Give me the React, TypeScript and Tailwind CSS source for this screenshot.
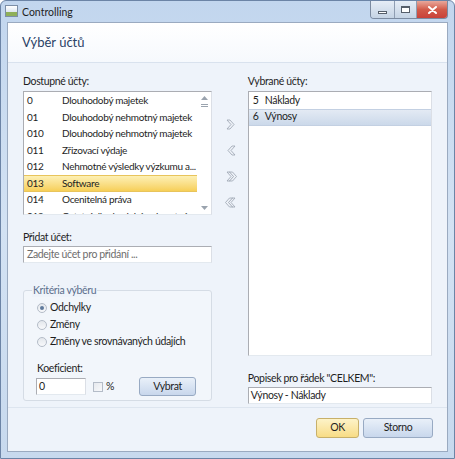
const font = { fontFamily: '"Lato", "Noto Sans", sans-serif' };

const available = [
  ['0', 'Dlouhodobý majetek'],
  ['01', 'Dlouhodobý nehmotný majetek'],
  ['010', 'Dlouhodobý nehmotný majetek'],
  ['011', 'Zřizovací výdaje'],
  ['012', 'Nehmotné výsledky výzkumu a...'],
  ['013', 'Software'],
  ['014', 'Ocenitelná práva'],
  ['019', 'Ostatní dlouhodobý nehmotný majetek'],
];

function Chevron({ double, left }: { double?: boolean; left?: boolean }) {
  const one = 'M2 1 L5 1 L9 5.5 L5 10 L2 10 L6 5.5 Z';
  return (
    <svg width="12" height="11" viewBox="0 0 12 11" className={left ? '-scale-x-100' : ''}>
      <path d={one} fill="#eef2f8" stroke="#9aa3b0" strokeWidth="0.8" strokeLinejoin="round" />
      {double && (
        <path d="M5 1 L8 1 L12 5.5 L8 10 L5 10 L9 5.5 Z" transform="translate(-0.5 0)" fill="#eef2f8" stroke="#9aa3b0" strokeWidth="0.8" strokeLinejoin="round" />
      )}
    </svg>
  );
}

function Radio({ checked, label }: { checked?: boolean; label: string }) {
  return (
    <div className="flex items-center h-[17px] whitespace-nowrap">
      <span className="shrink-0 w-[10px] h-[10px] rounded-full border border-[#b4bcc8] bg-gradient-to-b from-[#e3e7ec] to-[#f8f9fb] flex items-center justify-center">
        {checked && <span className="w-[4px] h-[4px] rounded-full bg-[#5f7a9c]" />}
      </span>
      <span className="ml-[3px] text-[10.5px] text-[#1e1e1e]">{label}</span>
    </div>
  );
}

const input = 'bg-white border border-[#abadb3] border-b-[#e3e9ef] border-r-[#dbdfe6]';
const blueBtn = 'rounded-[3px] border border-[#98aac3] bg-gradient-to-b from-[#e9f0f9] to-[#c8d7ec] flex items-center justify-center text-[10.5px] text-[#1e1e1e]';

export default function App() {
  return (
    <div style={font} className="w-[455px] h-[459px] tracking-[-0.35px] bg-gradient-to-b from-[#c2d6ee] via-[#d3e2f3] to-[#c7d9ee] rounded-t-[6px] border border-[#6c84a6] flex flex-col overflow-hidden select-none">
      {/* title bar */}
      <div className="h-[21px] flex items-start shrink-0">
        <div className="ml-[4px] mt-[4px] w-[13px] h-[12px] border border-[#7c8ea6] bg-gradient-to-b from-[#ffffff] to-[#c8d6e6] flex items-end">
          <div className="w-full h-[4px] bg-[#8fb05a]" />
        </div>
        <span className="ml-[4px] mt-[4px] text-[10.5px] text-[#1e1e1e] tracking-normal">Controlling</span>
        <div className="ml-auto mr-[6px] flex h-[18px] border border-t-0 border-[#7b8aa0] rounded-b-[4px] overflow-hidden">
          <div className="w-[24px] bg-gradient-to-b from-[#e6edf6] to-[#c5d3e4] flex items-center justify-center border-r border-[#8f9db2]">
            <div className="w-[9px] h-[3px] border border-[#555e6a] bg-white mt-[5px]" />
          </div>
          <div className="w-[22px] bg-gradient-to-b from-[#e6edf6] to-[#c5d3e4] flex items-center justify-center border-r border-[#8f9db2]">
            <div className="w-[9px] h-[7px] border border-[#555e6a] border-t-2 bg-white" />
          </div>
          <div className="w-[30px] bg-gradient-to-b from-[#e8a89c] via-[#d25b4a] to-[#c9423a] flex items-center justify-center">
            <svg width="9" height="8" viewBox="0 0 9 8">
              <path d="M1 1 L8 7 M8 1 L1 7" stroke="#ffffff" strokeWidth="2" strokeLinecap="round" />
            </svg>
          </div>
        </div>
      </div>

      {/* client */}
      <div className="mx-[6px] h-[430px] border border-[#9aaac0] bg-[#eef3fa] flex flex-col">
        <div className="h-[40px] bg-gradient-to-b from-[#ffffff] to-[#f6f9fd] border-b border-[#d9e2ee] flex items-center pl-[14px] shrink-0">
          <span className="text-[13px] text-[#2a4266] tracking-normal">Výběr účtů</span>
        </div>

        <div className="flex px-[15px] pt-[10px] h-[344px] shrink-0">
          {/* left */}
          <div className="w-[189px] flex flex-col">
            <div className="text-[10.5px] text-[#1e1e1e] h-[16px] leading-[16px]">Dostupné účty:</div>
            <div className={`mt-[2px] h-[124px] ${input} flex overflow-hidden`}>
              <div className="flex-1 min-w-0 pt-[0.5px] overflow-hidden">
                {available.map(([code, name]) => (
                  <div
                    key={code}
                    className={`h-[16.5px] flex items-center text-[10px] tracking-[-0.3px] text-[#1e1e1e] whitespace-nowrap ${code === '013' ? 'bg-gradient-to-b from-[#fdf0b4] to-[#f6cf57] border-y border-[#e8c45c]' : ''}`}
                  >
                    <span className="shrink-0 w-[38px] pl-[3px]">{code}</span>
                    <span>{name}</span>
                  </div>
                ))}
              </div>
              <div className="shrink-0 w-[14px] flex flex-col items-center justify-between py-[4px] bg-white">
                <div className="flex flex-col items-center">
                  <svg width="7" height="4" viewBox="0 0 7 4"><path d="M0 4 L3.5 0 L7 4 Z" fill="#9aa3ae" /></svg>
                  <div className="mt-[2px] w-[7px] h-[6px] flex flex-col justify-center gap-[1px]">
                    <div className="h-px bg-[#9aa3ae]" />
                    <div className="h-px bg-[#9aa3ae]" />
                  </div>
                </div>
                <svg width="7" height="4" viewBox="0 0 7 4"><path d="M0 0 L3.5 4 L7 0 Z" fill="#9aa3ae" /></svg>
              </div>
            </div>

            <div className="mt-[14px] text-[10.5px] text-[#1e1e1e] h-[16px] leading-[16px]">Přidat účet:</div>
            <div className={`mt-[1px] h-[17px] ${input} flex items-center pl-[3px] text-[10.5px] text-[#6d6d6d]`}>
              Zadejte účet pro přidání ...
            </div>

            <div className="mt-[27px] h-[111px] relative border border-[#d5dce5] rounded-[3px] bg-[#f2f6fb] px-[13px] pt-[8px]">
              <span className="absolute -top-[8px] left-[8px] px-[1px] bg-[#eef3fa] text-[10.5px] text-[#5b6f8c] leading-[14px]">Kritéria výběru</span>
              <Radio checked label="Odchylky" />
              <Radio label="Změny" />
              <Radio label="Změny ve srovnávaných údajích" />
              <div className="mt-[11px] text-[10.5px] text-[#1e1e1e] h-[14px] leading-[14px]">Koeficient:</div>
              <div className="flex items-center mt-[2px]">
                <div className={`w-[50px] h-[17px] ${input} pl-[2px] text-[10.5px] leading-[15px] text-[#1e1e1e] -ml-px`}>0</div>
                <div className="ml-[7px] w-[10px] h-[10px] border border-[#b4bcc8] bg-gradient-to-br from-[#e6e9ee] to-[#f8f9fb]" />
                <span className="ml-[3px] text-[10.5px] text-[#1e1e1e]">%</span>
                <div className={`ml-auto mr-[2px] w-[57px] h-[19px] ${blueBtn}`}>Vybrat</div>
              </div>
            </div>
          </div>

          {/* middle */}
          <div className="w-[36px] flex flex-col items-center pt-[46px] gap-[15px] pl-[2px]">
            <Chevron />
            <Chevron left />
            <Chevron double />
            <Chevron double left />
          </div>

          {/* right */}
          <div className="w-[185px] flex flex-col">
            <div className="text-[10.5px] text-[#1e1e1e] h-[16px] leading-[16px]">Vybrané účty:</div>
            <div className={`mt-[2px] h-[265px] ${input} pt-[0.5px]`}>
              <div className="h-[16.5px] flex items-center text-[10.5px] text-[#1e1e1e]">
                <span className="w-[13px] pl-[4px]">5</span>
                <span className="ml-[3px]">Náklady</span>
              </div>
              <div className="h-[16.5px] flex items-center text-[10.5px] text-[#1e1e1e] bg-gradient-to-b from-[#e3eaf4] to-[#ccd9ea] border-y border-[#c3d0e2]">
                <span className="w-[13px] pl-[4px]">6</span>
                <span className="ml-[3px]">Výnosy</span>
              </div>
            </div>
            <div className="mt-[14px] text-[10.5px] text-[#1e1e1e] h-[16px] leading-[16px]">Popisek pro řádek "CELKEM":</div>
            <div className={`mt-[1px] h-[17px] ${input} flex items-center pl-[2px] text-[10.5px] text-[#1e1e1e]`}>
              Výnosy - Náklady
            </div>
          </div>
        </div>

        {/* footer */}
        <div className="flex-1 border-t border-[#dde5ef] flex items-start justify-end px-[14px] pt-[10px] gap-[4px]">
          <div className="w-[43px] h-[20px] rounded-[3px] border border-[#c7b06a] bg-gradient-to-b from-[#fdf3c8] to-[#f8dc85] flex items-center justify-center text-[10.5px] text-[#1e1e1e]">
            OK
          </div>
          <div className={`w-[70px] h-[20px] ${blueBtn}`}>Storno</div>
        </div>
      </div>
    </div>
  );
}
